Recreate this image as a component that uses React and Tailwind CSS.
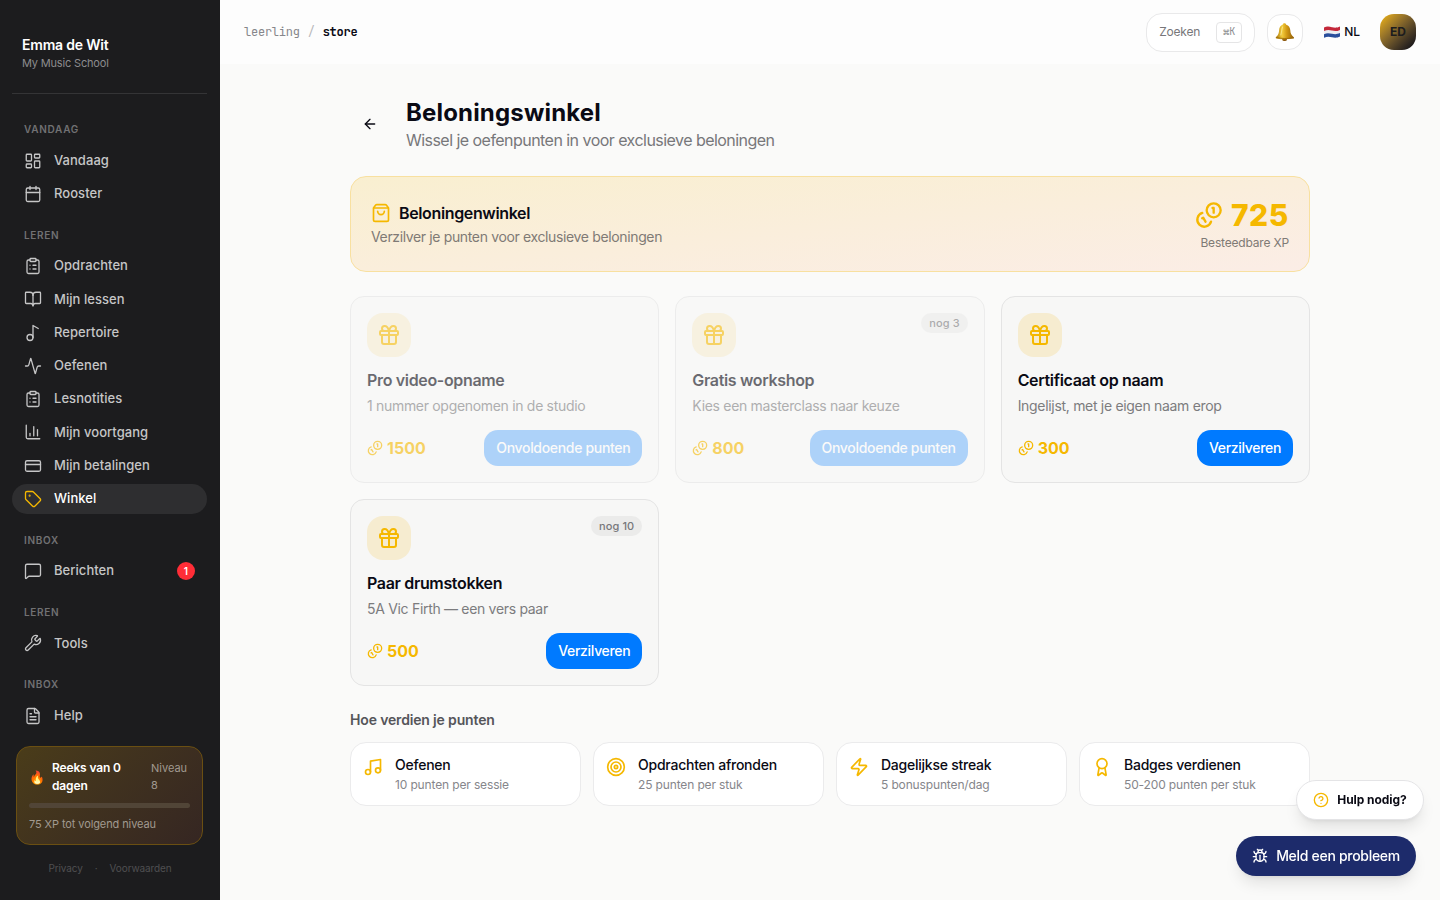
import React from 'react';
import {
  LayoutDashboard,
  Calendar,
  ClipboardList,
  BookOpen,
  Music,
  Music2,
  Activity,
  ChartColumn,
  CreditCard,
  Tag,
  MessageSquare,
  Wrench,
  FileText,
  ArrowLeft,
  ShoppingBag,
  Gift,
  Target,
  Zap,
  Award,
  CircleQuestionMark,
  Bug,
} from 'lucide-react';

const navSections = [
  {
    label: 'Vandaag',
    items: [
      { name: 'Vandaag', icon: LayoutDashboard },
      { name: 'Rooster', icon: Calendar },
    ],
  },
  {
    label: 'Leren',
    items: [
      { name: 'Opdrachten', icon: ClipboardList },
      { name: 'Mijn lessen', icon: BookOpen },
      { name: 'Repertoire', icon: Music2 },
      { name: 'Oefenen', icon: Activity },
      { name: 'Lesnotities', icon: ClipboardList },
      { name: 'Mijn voortgang', icon: ChartColumn },
      { name: 'Mijn betalingen', icon: CreditCard },
      { name: 'Winkel', icon: Tag, active: true },
    ],
  },
  { label: 'Inbox', items: [{ name: 'Berichten', icon: MessageSquare, badge: 1 }] },
  { label: 'Leren', items: [{ name: 'Tools', icon: Wrench }] },
  { label: 'Inbox', items: [{ name: 'Help', icon: FileText }] },
];

const rewards = [
  { title: 'Pro video-opname', description: '1 nummer opgenomen in de studio', cost: 1500 },
  { title: 'Gratis workshop', description: 'Kies een masterclass naar keuze', cost: 800, stock: 3 },
  { title: 'Certificaat op naam', description: 'Ingelijst, met je eigen naam erop', cost: 300 },
  { title: 'Paar drumstokken', description: '5A Vic Firth — een vers paar', cost: 500, stock: 10 },
];

const earnWays = [
  { title: 'Oefenen', text: '10 punten per sessie', icon: Music },
  { title: 'Opdrachten afronden', text: '25 punten per stuk', icon: Target },
  { title: 'Dagelijkse streak', text: '5 bonuspunten/dag', icon: Zap },
  { title: 'Badges verdienen', text: '50-200 punten per stuk', icon: Award },
];

const balance = 725;

const CoinsIcon = ({ className }) => (
  <svg
    viewBox="0 0 24 24"
    fill="none"
    stroke="currentColor"
    strokeWidth="2"
    strokeLinecap="round"
    strokeLinejoin="round"
    className={className}
  >
    <path d="M13.744 17.736a6 6 0 1 1-7.48-7.48" />
    <path d="M15 6h1v4" />
    <path d="m6.134 14.768.866-.5 2 3.464" />
    <circle cx="16" cy="8" r="6" />
  </svg>
);

const BellIcon = () => (
  <svg viewBox="0 0 20 20" className="h-5 w-5">
    <defs>
      <linearGradient id="bell" x1="0" y1="0" x2="1" y2="0">
        <stop offset="0" stopColor="#a87408" />
        <stop offset="0.35" stopColor="#f3cd3d" />
        <stop offset="0.6" stopColor="#d39a14" />
        <stop offset="1" stopColor="#8f5d08" />
      </linearGradient>
    </defs>
    <ellipse cx="9.6" cy="17.4" rx="2.4" ry="1.6" fill="#8a5408" />
    <path
      d="M9.4 1.2c1 0 1.7.6 1.8 1.5 2.6.7 3.9 2.8 4.1 5.6.2 3.200.9 4.900 3.200 6.600.8.600.7 1.500-.2 1.700-5.500 1-11.500 1-16.800-.1-1-.2-1-1.100-.2-1.700 2-1.700 2.600-3.400 2.800-6.500.2-2.900 1.300-4.900 3.500-5.600.1-.9.8-1.500 1.800-1.500z"
      fill="url(#bell)"
    />
    <path d="M1.800 15.600c5 1.200 11 1.200 16.400.1" fill="none" stroke="#9a6a0c" strokeWidth="0.9" strokeLinecap="round" />
    <path d="M7.600 5c-1 1.500-.8 5-1.800 8" fill="none" stroke="#fff0a0" strokeWidth="1.100" strokeLinecap="round" opacity="0.700" />
  </svg>
);

const FlagIcon = () => (
  <svg viewBox="0 0 16 12" className="h-3 w-4">
    <path d="M0 1.500C3-.2 5.500.5 8 1.200s5 .8 8-.7v10c-3 1.500-5.500 1.300-8 .7s-5-.9-8 .5z" fill="#eceef2" />
    <path d="M0 1.500C3-.2 5.500.5 8 1.200s5 .8 8-.7v3.400c-3 1.500-5.500 1.300-8 .7s-5-.9-8 .5z" fill="#c4283a" />
    <path d="M0 8.200c3-1.500 5.500-.9 8-.4s5 .7 8-.7v3.400c-3 1.500-5.500 1.300-8 .7s-5-.9-8 .5z" fill="#2a4f9c" />
  </svg>
);

const Sidebar = () => (
  <aside className="flex h-full w-[220px] shrink-0 flex-col bg-[#1c1c1e] px-3">
    <div className="mb-7 h-[94px] w-[195px] border-b border-[#343436] px-2.5 pt-9">
      <p className="text-sm leading-[18px] font-semibold tracking-[-0.2px] text-white">Emma de Wit</p>
      <p className="text-[11px] leading-[18px] tracking-[-0.17px] text-[#8c8c8e]">My Music School</p>
    </div>

    <nav className="w-[195px]">
      {navSections.map((section, index) => (
        <div key={index} className="mb-[19px]">
          <p className="mb-[9px] px-3 text-[10px] leading-[15px] font-semibold tracking-[0.7px] text-[#717173] uppercase">
            {section.label}
          </p>
          <div className="flex flex-col gap-1">
            {section.items.map(({ name, icon: Icon, active, badge }) => (
              <a
                key={name}
                className={`flex h-[29.25px] items-center gap-3 rounded-full px-3 text-[13px] font-medium tracking-[0.05px] ${
                  active ? 'bg-[#2e2e30] text-white' : 'text-[#c6c6c7]'
                }`}
              >
                <Icon className={`h-[18px] w-[18px] ${active ? 'text-[#f5b800]' : ''}`} strokeWidth={1.75} />
                <span>{name}</span>
                {badge && (
                  <span className="ml-auto flex h-[18px] w-[18px] items-center justify-center rounded-full bg-[#ff2d37] text-[10px] font-semibold text-white">
                    {badge}
                  </span>
                )}
              </a>
            ))}
          </div>
        </div>
      ))}
    </nav>

    <div className="mx-1 -mt-[3px] h-[99px] w-[187px] rounded-[14px] border border-[#6a4f12] bg-linear-135 from-[#4a3c19] to-[#352622] px-3 pt-3">
      <div className="flex items-center gap-2">
        <span className="w-[15px] shrink-0 text-[13px] leading-5">🔥</span>
        <p className="w-[91px] shrink-0 text-xs leading-[18px] font-semibold tracking-[-0.15px] text-white">
          Reeks van 0 dagen
        </p>
        <p className="text-[11px] leading-[17px] text-[#a19a90]">Niveau 8</p>
      </div>
      <div className="mt-2 h-[5px] rounded-full bg-[#514537]" />
      <p className="mt-2 text-[11px] leading-[16px] tracking-[-0.1px] text-[#a19a90]">75 XP tot volgend niveau</p>
    </div>

    <div className="mt-4 flex justify-center gap-3 text-[10px] leading-[15px] tracking-[-0.1px] text-[#4f4f51]">
      <span>Privacy</span>
      <span>·</span>
      <span>Voorwaarden</span>
    </div>
  </aside>
);

const Topbar = () => (
  <header className="flex h-16 items-center bg-[#fdfdfd] px-6">
    <div className="flex gap-2 font-['JetBrains_Mono','Liberation_Mono',monospace] text-xs tracking-[-0.02em]">
      <span className="text-[#86868b]">leerling</span>
      <span className="text-[#b8b8bb]">/</span>
      <span className="font-semibold text-[#0a0a14]">store</span>
    </div>

    <div className="ml-auto flex items-center">
      <button className="flex h-[39px] w-[109px] items-center justify-between rounded-2xl border border-[#e9e9ea] bg-white px-3 text-xs tracking-[-0.2px] text-[#77777a]">
        Zoeken
        <kbd className="flex h-[21px] w-[26px] items-center justify-center rounded border border-[#e5e5e6] font-['JetBrains_Mono','Liberation_Mono',monospace] text-[10px] tracking-normal text-[#8e8e91]">
          ⌘K
        </kbd>
      </button>
      <button className="ml-3 flex h-9 w-9 items-center justify-center rounded-[14px] border border-[#e9e9ea] bg-white">
        <BellIcon />
      </button>
      <button className="ml-[21px] flex items-center gap-1 text-xs font-medium text-[#0a0a14]">
        <FlagIcon />
        NL
      </button>
      <div className="ml-5 flex h-9 w-9 items-center justify-center rounded-[14px] bg-linear-135 from-[#f5b800] to-[#0a0a14] text-xs font-bold text-[#1c1c1e]">
        ED
      </div>
    </div>
  </header>
);

const RewardCard = ({ title, description, cost, stock }) => {
  const affordable = cost <= balance;

  return (
    <div
      className={`rounded-[14px] border border-[#e4e4e4] bg-[#f7f7f6] p-4 ${affordable ? '' : 'opacity-60'}`}
    >
      <div className="mb-3 flex items-start justify-between">
        <div className="flex h-11 w-11 items-center justify-center rounded-2xl bg-[#f6ecd0] text-[#f5b800]">
          <Gift className="h-6 w-6" />
        </div>
        {stock && (
          <span className="rounded-full bg-[#ebebea] px-2 text-[11px] leading-5 font-medium tracking-[0.1px] text-[#77777a]">
            nog {stock}
          </span>
        )}
      </div>
      <h3 className="text-base leading-[22px] font-semibold tracking-[-0.34px] text-[#0a0a14]">{title}</h3>
      <p className="mt-1 text-sm leading-[21px] tracking-[-0.31px] text-[#7c7c7e]">{description}</p>
      <div className="mt-3.5 flex items-center justify-between">
        <div className="flex items-center gap-1 text-[#f5b800]">
          <CoinsIcon className="h-4 w-4" />
          <span className="text-base font-bold">{cost}</span>
        </div>
        <button
          disabled={!affordable}
          className="h-9 rounded-[14px] bg-[#007aff] px-3 text-sm font-medium tracking-[-0.32px] text-white disabled:opacity-50"
        >
          {affordable ? 'Verzilveren' : 'Onvoldoende punten'}
        </button>
      </div>
    </div>
  );
};

const App = () => {
  return (
    <div className="flex h-screen w-full overflow-hidden bg-[#fafaf9] font-[Inter,sans-serif] text-[#0a0a14]">
      <Sidebar />

      <div className="flex-1">
        <Topbar />

        <main className="mx-auto w-[960px] pt-8">
          <div className="mb-6 flex items-center gap-4">
            <button className="flex h-10 w-10 items-center justify-center">
              <ArrowLeft className="h-4 w-4" />
            </button>
            <div>
              <h1 className="pt-0.5 text-2xl leading-[30px] font-bold tracking-[0.17px]">Beloningswinkel</h1>
              <p className="text-base leading-6 tracking-[-0.54px] text-[#77777a]">
                Wissel je oefenpunten in voor exclusieve beloningen
              </p>
            </div>
          </div>

          <section className="mb-6 flex items-center justify-between rounded-2xl border border-[#f8e0a0] bg-linear-to-br from-[#f9efd0] to-[#fbede6] p-5">
            <div>
              <div className="flex items-center gap-2">
                <ShoppingBag className="h-5 w-5 text-[#f5b800]" />
                <h2 className="text-base leading-6 font-semibold tracking-[-0.36px]">Beloningenwinkel</h2>
              </div>
              <p className="mt-0.5 text-sm leading-5 tracking-[-0.36px] text-[#7f7a75]">
                Verzilver je punten voor exclusieve beloningen
              </p>
            </div>
            <div className="text-right">
              <div className="flex items-center justify-end gap-2 text-[#f5b800]">
                <CoinsIcon className="h-7 w-7" />
                <span className="text-3xl leading-9 font-extrabold tracking-[0.6px]">{balance}</span>
              </div>
              <p className="mt-0.5 text-xs leading-4 tracking-[-0.18px] text-[#7f7a75]">Besteedbare XP</p>
            </div>
          </section>

          <section className="grid grid-cols-3 gap-4">
            {rewards.map((reward) => (
              <RewardCard key={reward.title} {...reward} />
            ))}
          </section>

          <h3 className="mt-6 mb-3 text-sm leading-5 font-semibold tracking-[-0.16px] text-[#55555a]">
            Hoe verdien je punten
          </h3>
          <section className="grid grid-cols-4 gap-3">
            {earnWays.map(({ title, text, icon: Icon }) => (
              <div key={title} className="flex items-start gap-3 rounded-2xl border border-[#ebebec] bg-white p-3">
                <Icon className="mt-0.5 h-5 w-5 text-[#f5b800]" />
                <div>
                  <p className="text-sm leading-5 font-medium tracking-[-0.24px]">{title}</p>
                  <p className="mt-0.5 text-xs leading-4 tracking-[-0.14px] text-[#86868b]">{text}</p>
                </div>
              </div>
            ))}
          </section>
        </main>
      </div>

      <button className="fixed right-4 bottom-20 flex h-10 w-32 items-center justify-center gap-2 rounded-full border border-[#e4e4e6] bg-white text-xs font-bold tracking-[-0.05px] shadow-lg">
        <CircleQuestionMark className="h-4 w-4 text-[#f5b800]" />
        Hulp nodig?
      </button>
      <button className="fixed right-6 bottom-6 flex h-10 w-[180px] items-center justify-center gap-2 rounded-full bg-[#1d2b6b] text-sm font-medium tracking-[-0.3px] text-white shadow-lg">
        <Bug className="h-4 w-4" />
        Meld een probleem
      </button>
    </div>
  );
};

export default App;
